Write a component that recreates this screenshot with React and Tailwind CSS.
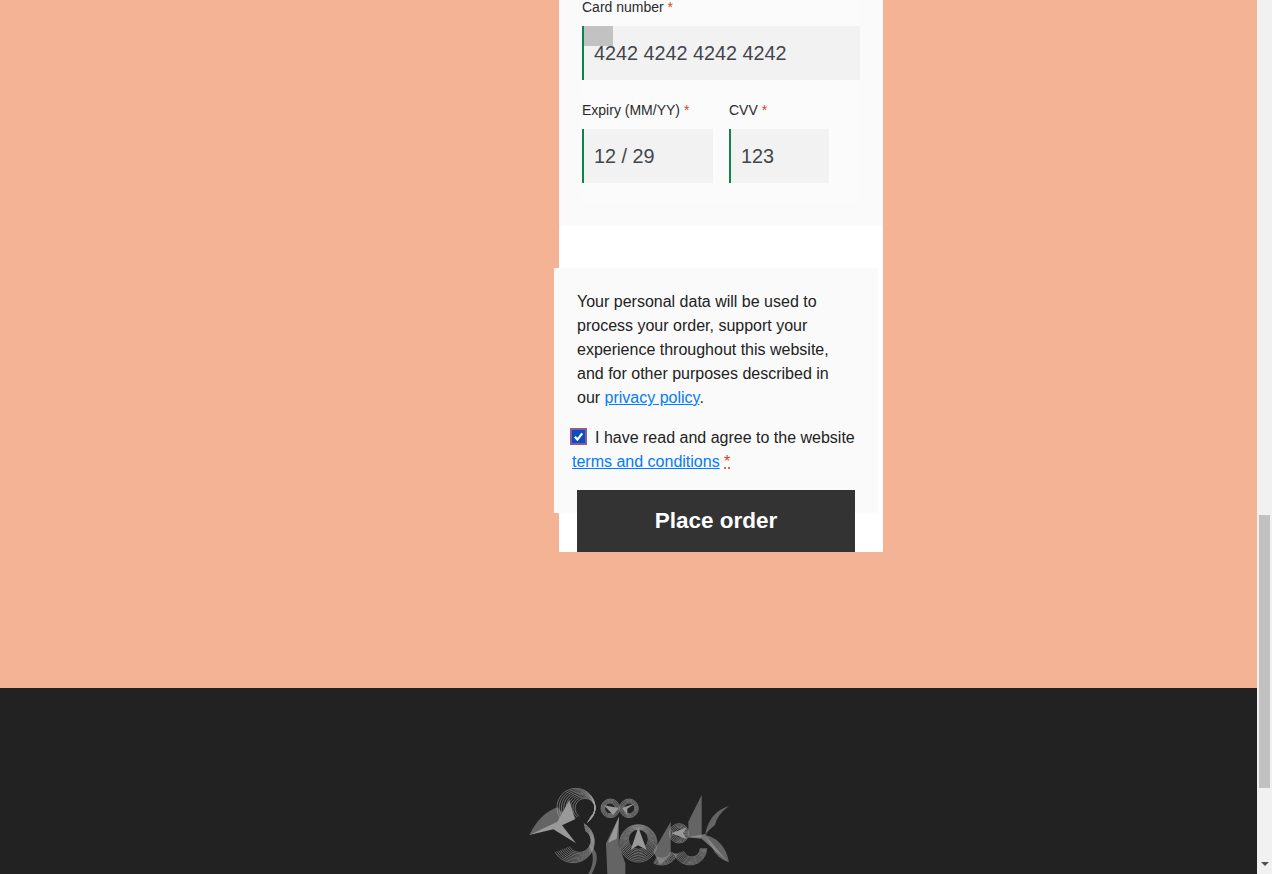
import React from "react";

const Req = () => <span className="text-[#e2401c]">*</span>;

function Field({ label, value, className }) {
  return (
    <div className={className}>
      <div className="h-5 text-[14px] leading-5 text-[#2b2b2b]">
        {label} <Req />
      </div>
      <div className="mt-[9px] flex h-[54px] items-center border-l-2 border-[#0f834d] bg-[#f2f2f2] pl-[10px] pt-[1px] text-[19.8px] text-[#43454b]">
        {value}
      </div>
    </div>
  );
}

function arc(cx, cy, r, a0, a1) {
  const p = (a) => [cx + r * Math.cos((a * Math.PI) / 180), cy + r * Math.sin((a * Math.PI) / 180)];
  const [x0, y0] = p(a0);
  const [x1, y1] = p(a1);
  return `M${x0.toFixed(2)} ${y0.toFixed(2)}A${r.toFixed(2)} ${r.toFixed(2)} 0 ${Math.abs(a1 - a0) > 180 ? 1 : 0} 1 ${x1.toFixed(2)} ${y1.toFixed(2)}`;
}

function Crescent({ from, to, a0, a1 }) {
  const n = Math.max(3, Math.round(Math.abs(to[2] - from[2]) / 3.4) + 1);
  const items = [];
  for (let i = 0; i < n; i++) {
    const t = i / (n - 1);
    const cx = from[0] + (to[0] - from[0]) * t;
    const cy = from[1] + (to[1] - from[1]) * t;
    const r = from[2] + (to[2] - from[2]) * t;
    items.push(
      a0 === undefined ? (
        <circle key={i} cx={cx} cy={cy} r={r} />
      ) : (
        <path key={i} d={arc(cx, cy, r, a0, a1)} />
      )
    );
  }
  return <g>{items}</g>;
}

function Logo() {
  return (
    <svg width="220" height="94" viewBox="0 0 660 282" fill="none" className="block">
      <defs>
        <pattern id="hv" width="3.6" height="3.6" patternUnits="userSpaceOnUse">
          <path d="M1.8 0V3.6" stroke="#a6a6a6" strokeWidth="1.8" />
        </pattern>
        <pattern id="hd" width="3.6" height="3.6" patternUnits="userSpaceOnUse" patternTransform="rotate(40)">
          <path d="M1.8 0V3.6" stroke="#a6a6a6" strokeWidth="1.8" />
        </pattern>
      </defs>
      <g stroke="#a6a6a6" strokeWidth="1.7">
        <Crescent from={[195, 85, 30]} to={[168, 82, 57]} a0={125} a1={415} />
        <Crescent from={[178, 182, 35]} to={[160, 185, 63]} a0={-60} a1={150} />
        <Crescent from={[355, 178, 30]} to={[355, 190, 56]} />
        <Crescent from={[270, 85, 16]} to={[271, 85, 28]} />
        <Crescent from={[328, 85, 16]} to={[327, 85, 28]} />
        <Crescent from={[480, 160, 14]} to={[477, 160, 29]} />
        <Crescent from={[515, 205, 26]} to={[510, 205, 50]} a0={0} a1={160} />
        <Crescent from={[425, 205, 30]} to={[425, 205, 50]} a0={20} a1={120} />
      </g>
      <g>
        <path d="M28 165Q60 100 112 82L140 110 100 135Z" fill="url(#hd)" />
        <path d="M205 192Q250 220 215 282L205 282Q232 235 205 192Z" fill="url(#hv)" />
        <path d="M258 190 297 110 296 195 316 250V282H262Z" fill="url(#hv)" />
        <path d="M400 215 452 125V225L420 255Z" fill="url(#hv)" />
        <path d="M545 45 505 125V172H545Z" fill="url(#hv)" />
        <path d="M556 160Q570 95 627 78 590 105 585 135Z" fill="url(#hv)" />
        <path d="M556 165Q615 180 627 247 590 235 575 200Z" fill="url(#hv)" />
      </g>
      <g fill="#999999">
        <path d="M28 165 112 125 148 60 165 118 126 136 168 190 100 148Z" />
        <path d="M297 110 264 188 290 176Z" />
        <path d="M355 142 332 210 354 196 380 210Z" />
        <path d="M252 76 296 84 280 106Z" />
        <path d="M346 70 306 84 322 106 322 86Z" />
        <path d="M454 160 500 142 490 160 500 178Z" />
        <path d="M500 172 556 162 620 80 570 145 556 166 624 246 545 176Z" fillOpacity="0.7" />
      </g>
    </svg>
  );
}

export default function App() {
  return (
    <div
      className="flex h-[874px] w-[1272px] overflow-hidden"
      style={{ fontFamily: '"Liberation Sans", Arial, sans-serif' }}
    >
      <div className="w-[1257px] shrink-0">
        <div className="h-[688px] bg-[#f4b394] pl-[559px]">
          <div className="h-[552px] w-[324px] bg-white">
            <div className="h-[226px] bg-[#fafafa] px-[23px]">
              <div className="h-[204px] bg-[#fbfbfb]">
                <div className="relative -top-[3px]">
                  <div className="relative">
                    <Field label="Card number" value="4242 4242 4242 4242" />
                    <div className="absolute left-[2px] top-[29px] h-5 w-[29px] bg-[#c2c2c2]" />
                  </div>
                  <div className="mt-5 flex gap-4">
                    <Field label="Expiry (MM/YY)" value="12 / 29" className="w-[131px]" />
                    <Field label="CVV" value="123" className="w-[100px]" />
                  </div>
                </div>
              </div>
            </div>
            <div className="-ml-[5px] mt-[42px] h-[245px] w-[324px] bg-[#fafafa] px-[23px] pt-[22px] text-[16px] leading-6 text-[#222222]">
              <p className="w-[260px]">
                Your personal data will be used to process your order, support your experience throughout this website, and for other purposes described in our{" "}
                <a className="text-[#007bff] underline">privacy policy</a>.
              </p>
              <div className="-ml-[5px] mt-4">
                <span className="mr-2 -ml-[2px] inline-block h-[17px] w-[17px] border-2 border-[#8d5a92] bg-[#0a4fc0] align-[-2px]">
                  <svg viewBox="0 0 13 13" className="block h-[13px] w-[13px]" fill="none">
                    <path d="M2.8 6.8 5.4 9.6 10.2 3.4" stroke="white" strokeWidth="2.2" />
                  </svg>
                </span>
                <span>I have read and agree to the website</span>
                <br />
                <a className="text-[#007bff] underline">terms and conditions</a>{" "}
                <abbr className="text-[#e2401c] underline decoration-dotted">*</abbr>
              </div>
            </div>
            <div className="relative ml-[18px] -mt-[23px] flex h-[62px] w-[278px] items-center justify-center bg-[#333333] text-[22.5px] font-bold text-white">
              Place order
            </div>
          </div>
        </div>
        <div className="h-[186px] overflow-hidden bg-[#222222] pl-[520px] pt-[92px]">
          <Logo />
        </div>
      </div>
      <div className="flex w-[15px] shrink-0 flex-col bg-[#f1f1f1] pl-[2px] pr-[2px]">
        <div className="mt-[515px] h-[273px] w-[11px] bg-[#c1c1c1]" />
        <div className="mt-[74px] flex justify-center">
          <div className="h-0 w-0 border-x-[4px] border-t-[4px] border-x-transparent border-t-[#505050]" />
        </div>
      </div>
    </div>
  );
}
